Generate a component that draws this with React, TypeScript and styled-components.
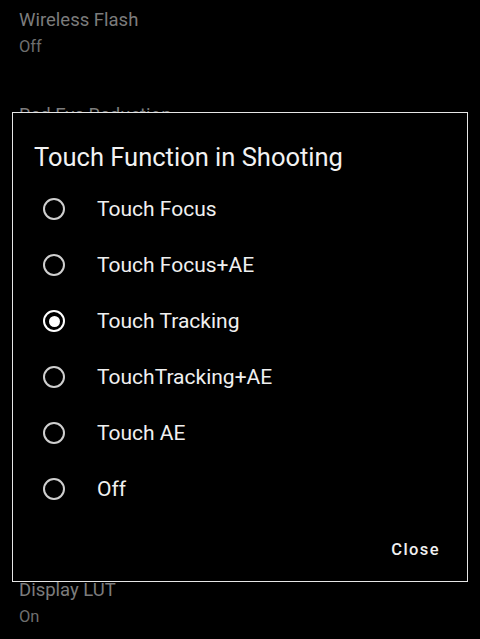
import React, { useState } from 'react';
import styled, { createGlobalStyle } from 'styled-components';

const GlobalStyle = createGlobalStyle`
  html, body {
    margin: 0;
    padding: 0;
    background: #000;
  }
  body {
    font-family: Roboto, "Noto Sans", sans-serif;
    -webkit-font-smoothing: antialiased;
  }
`;

const Screen = styled.div`
  position: relative;
  width: 480px;
  height: 639px;
  background: #000;
  overflow: hidden;
`;

const SettingsList = styled.div`
  display: flex;
  flex-direction: column;
  padding: 8px 19px 0;
`;

const SettingItem = styled.div<{ gap?: number }>`
  display: flex;
  flex-direction: column;
  height: 95px;
  margin-bottom: ${p => p.gap ?? 0}px;
`;

const SettingLabel = styled.div`
  font-size: 18.5px;
  line-height: 24px;
  color: #7c7c7c;
`;

const SettingValue = styled.div`
  font-size: 16.5px;
  line-height: 22px;
  margin-top: 4px;
  color: #6e6e6e;
`;

const Overlay = styled.div`
  position: absolute;
  left: 12px;
  top: 112px;
  width: 456px;
  height: 470px;
  box-sizing: border-box;
  border: 1.5px solid #e6e6e6;
  background: #000;
  display: flex;
  flex-direction: column;
`;

const Title = styled.h2`
  margin: 0;
  padding: 28px 0 0 21px;
  font-size: 25.5px;
  line-height: 32px;
  font-weight: 400;
  color: #f2f2f2;
`;

const Options = styled.div`
  display: flex;
  flex-direction: column;
  margin-top: 8px;
`;

const Option = styled.label`
  display: flex;
  align-items: center;
  height: 56px;
  padding-left: 30px;
  cursor: pointer;
`;

const Radio = styled.span<{ checked: boolean }>`
  width: 22px;
  height: 22px;
  box-sizing: border-box;
  border-radius: 50%;
  border: ${p => (p.checked ? '2.5px solid #fff' : '2px solid #cfcfcf')};
  display: flex;
  align-items: center;
  justify-content: center;
  flex-shrink: 0;

  &::after {
    content: '';
    display: ${p => (p.checked ? 'block' : 'none')};
    width: 11px;
    height: 11px;
    border-radius: 50%;
    background: #fff;
  }
`;

const OptionText = styled.span`
  margin-left: 32px;
  font-size: 21px;
  color: #f0f0f0;
`;

const Footer = styled.div`
  margin-top: auto;
  display: flex;
  justify-content: flex-end;
  padding: 0 27px 21px 0;
`;

const CloseButton = styled.button`
  background: none;
  border: none;
  padding: 0;
  font-family: Roboto, "Noto Sans", sans-serif;
  font-size: 16.5px;
  font-weight: 500;
  letter-spacing: 1.4px;
  line-height: 20px;
  color: #f0f0f0;
  cursor: pointer;
`;

const options = [
  'Touch Focus',
  'Touch Focus+AE',
  'Touch Tracking',
  'TouchTracking+AE',
  'Touch AE',
  'Off',
];

export default function App() {
  const [selected, setSelected] = useState(2);

  return (
    <>
      <GlobalStyle />
      <Screen>
        <SettingsList>
          <SettingItem>
            <SettingLabel>Wireless Flash</SettingLabel>
            <SettingValue>Off</SettingValue>
          </SettingItem>
          <SettingItem gap={380}>
            <SettingLabel>Red Eye Reduction</SettingLabel>
            <SettingValue>Off</SettingValue>
          </SettingItem>
          <SettingItem>
            <SettingLabel>Display LUT</SettingLabel>
            <SettingValue>On</SettingValue>
          </SettingItem>
        </SettingsList>
        <Overlay>
          <Title>Touch Function in Shooting</Title>
          <Options>
            {options.map((o, i) => (
              <Option key={o} onClick={() => setSelected(i)}>
                <Radio checked={selected === i} />
                <OptionText>{o}</OptionText>
              </Option>
            ))}
          </Options>
          <Footer>
            <CloseButton>Close</CloseButton>
          </Footer>
        </Overlay>
      </Screen>
    </>
  );
}
